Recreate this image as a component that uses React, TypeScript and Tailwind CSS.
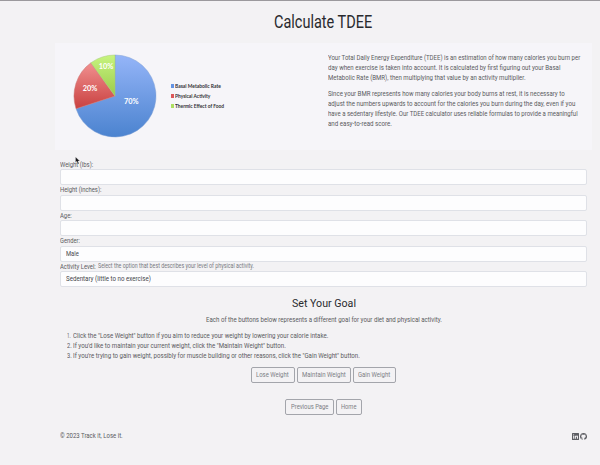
import { useLayoutEffect, useRef, useState } from "react";

type FitProps = { w: number; children: string; className?: string };

// A single line of text condensed or widened to a fixed measure.
function Fit({ w, children, className = "" }: FitProps) {
  const ref = useRef<HTMLSpanElement>(null);
  const [scale, setScale] = useState(1);
  useLayoutEffect(() => {
    if (ref.current) setScale(w / ref.current.offsetWidth);
  }, [w]);
  return (
    <span className={`inline-block whitespace-nowrap text-left ${className}`} style={{ width: w }}>
      <span ref={ref} className="inline-block origin-left" style={{ transform: `scaleX(${scale})` }}>
        {children}
      </span>
    </span>
  );
}

function Field({ label, w, value, valueW, hint }: { label: string; w: number; value?: string; valueW?: number; hint?: string }) {
  return (
    <div className="flex h-[25.5px] flex-col">
      <div className="flex h-[9.5px] items-center gap-[2px] leading-[9px]">
        <Fit w={w}>{label}</Fit>
        {hint && <Fit w={156} className="text-[6.3px] text-[#777980]">{hint}</Fit>}
      </div>
      <div className="flex h-4 items-center rounded-[2px] border border-[#dfe1e7] bg-[#fdfdfe] px-[4.5px] leading-[10px] text-[#45474c]">
        {value && <Fit w={valueW ?? 20}>{value}</Fit>}
      </div>
    </div>
  );
}

function Button({ children, w }: { children: string; w: number }) {
  return (
    <button className="flex h-4 items-center rounded-[2px] border border-[#a3a5ab] px-[4.3px] text-[7.4px] leading-[10px] text-[#7c7e84]">
      <Fit w={w}>{children}</Fit>
    </button>
  );
}

function Pie() {
  return (
    <svg className="block h-[84px] w-[84px]" viewBox="0 0 84 84">
      <defs>
        <linearGradient id="blue" x1="0" y1="0" x2="0" y2="1">
          <stop stopColor="#95b5f8" /><stop offset="1" stopColor="#4b83cf" />
        </linearGradient>
        <linearGradient id="red" x1="0" y1="0" x2="0" y2="1">
          <stop stopColor="#f19090" /><stop offset="1" stopColor="#c94140" />
        </linearGradient>
        <linearGradient id="green" x1="0" y1="0" x2="0" y2="1">
          <stop stopColor="#c7f47f" /><stop offset="1" stopColor="#9bcb4c" />
        </linearGradient>
      </defs>
      <path d="M42 42V1A41 41 0 1 1 3.01 54.67Z" fill="url(#blue)" stroke="#7d9ed4" strokeWidth=".5" />
      <path d="M42 42L3.01 54.67A41 41 0 0 1 17.9 8.83Z" fill="url(#red)" stroke="#c87877" strokeWidth=".5" />
      <path d="M42 42L17.9 8.83A41 41 0 0 1 42 1Z" fill="url(#green)" stroke="#a5c878" strokeWidth=".5" />
      <g fill="#fff" fontFamily="Lato, sans-serif" fontSize="7.4" fontWeight="700" textAnchor="middle">
        <text x="58.3" y="50">70%</text>
        <text x="17" y="36.5">20%</text>
        <text x="33" y="14.5">10%</text>
      </g>
    </svg>
  );
}

const paragraphs: [string, number][][] = [
  [
    ["Your Total Daily Energy Expenditure (TDEE) is an estimation of how many calories you burn per", 252.5],
    ["day when exercise is taken into account. It is calculated by first figuring out your Basal", 232],
    ["Metabolic Rate (BMR), then multiplying that value by an activity multiplier.", 198],
  ],
  [
    ["Since your BMR represents how many calories your body burns at rest, it is necessary to", 237],
    ["adjust the numbers upwards to account for the calories you burn during the day, even if you", 247.5],
    ["have a sedentary lifestyle. Our TDEE calculator uses reliable formulas to provide a meaningful", 249.5],
    ["and easy-to-read score.", 63.5],
  ],
];

const steps: [string, string, number][] = [
  ["1.", 'Click the "Lose Weight" button if you aim to reduce your weight by lowering your calorie intake.', 255],
  ["2.", 'If you\'d like to maintain your current weight, click the "Maintain Weight" button.', 213],
  ["3.", 'If you\'re trying to gain weight, possibly for muscle building or other reasons, click the "Gain Weight" button.', 286.5],
];

export default function App() {
  return (
    <div className="h-[465px] w-[600px] overflow-hidden border-t border-[#9b999d] bg-[#f3f2f4] font-['Roboto',sans-serif] text-[7.2px] text-[#5a5b60]">
      <div className="relative ml-[55px] w-[537px]">
        <h1 className="flex h-[42px] items-center justify-center text-[17.5px] leading-[20px] text-[#292a2e]">
          <Fit w={98.5}>Calculate TDEE</Fit>
        </h1>

        <section className="flex h-[106.5px] bg-[#f6f5f9]">
          <div className="flex w-[273px] pl-[17.8px] pt-[10.6px]">
            <Pie />
            <ul className="ml-[14px] pt-[27.7px] font-['Lato','Open_Sans',sans-serif] text-[5.4px] font-bold text-[#303034]">
              <li className="flex h-[9.8px] items-center gap-[1px]"><i className="size-[3.5px] bg-[#6493e2]" /><Fit w={45.5}>Basal Metabolic Rate</Fit></li>
              <li className="flex h-[9.8px] items-center gap-[1px]"><i className="size-[3.5px] bg-[#dc5759]" /><Fit w={35}>Physical Activity</Fit></li>
              <li className="flex h-[9.8px] items-center gap-[1px]"><i className="size-[3.5px] bg-[#aede62]" /><Fit w={49.5}>Thermic Effect of Food</Fit></li>
            </ul>
          </div>
          <div className="flex flex-col gap-[6.7px] pt-[10.1px]">
            {paragraphs.map((lines, i) => (
              <div key={i}>
                {lines.map(([line, w]) => (
                  <div key={line} className="h-[9.9px] leading-[9.9px]"><Fit w={w}>{line}</Fit></div>
                ))}
              </div>
            ))}
          </div>
        </section>

        <form className="px-[5px] pt-[10px]">
          <Field label="Weight (lbs):" w={33} />
          <Field label="Height (inches):" w={41} />
          <Field label="Age:" w={11.5} />
          <Field label="Gender:" w={20} value="Male" valueW={13} />
          <Field label="Activity Level:" w={36} value="Sedentary (little to no exercise)" valueW={85} hint="Select the option that best describes your level of physical activity." />
        </form>

        <h2 className="mt-[9px] flex h-[15px] items-center justify-center text-[11.8px] leading-[15px] text-[#292a2e]">
          <Fit w={64}>Set Your Goal</Fit>
        </h2>
        <p className="mt-[3.5px] flex h-[10px] items-center justify-center leading-[10px]">
          <Fit w={236}>Each of the buttons below represents a different goal for your diet and physical activity.</Fit>
        </p>
        <ol className="mt-[6.5px] pl-[12px]">
          {steps.map(([n, text, w]) => (
            <li key={n} className="flex h-[9.9px] items-center leading-[9.9px]">
              <span className="w-[6px]"><Fit w={n === "1." ? 3.7 : 4.7}>{n}</Fit></span>
              <Fit w={w}>{text}</Fit>
            </li>
          ))}
        </ol>
        <div className="mt-[6.5px] flex justify-center gap-[2px]">
          <Button w={33}>Lose Weight</Button>
          <Button w={43.5}>Maintain Weight</Button>
          <Button w={32.5}>Gain Weight</Button>
        </div>
        <div className="mt-4 flex justify-center gap-[2px]">
          <Button w={37.5}>Previous Page</Button>
          <Button w={15.5}>Home</Button>
        </div>

        <footer className="mt-[15.5px] flex h-[12px] items-center justify-between pl-[5px] pr-[5px]">
          <Fit w={62.5}>© 2023 Track it, Lose it.</Fit>
          <div className="flex items-center gap-[1.5px]">
            <svg className="size-[7px]" viewBox="0 0 16 16" fill="#5d5e63">
              <path fillRule="evenodd" d="M0 1.2Q0 0 1.2 0h13.6Q16 0 16 1.2v13.6q0 1.2-1.2 1.2H1.2Q0 16 0 14.8ZM2.6 6.2v7.2H5V6.2Zm1.2-3.5a1.25 1.25 0 1 0 0 2.5 1.25 1.25 0 0 0 0-2.5ZM6.5 6.2v7.2h2.4v-4c0-2 2.4-2.1 2.4 0v4h2.4V8.8c0-3.5-3.7-3.4-4.8-1.6v-1Z" />
            </svg>
            <svg className="size-[7px]" viewBox="0 0 16 16" fill="#5d5e63">
              <path d="M8 0a8 8 0 0 0-2.53 15.59c.4.07.55-.17.55-.38v-1.49c-2.23.49-2.7-.95-2.7-.95-.36-.92-.89-1.17-.89-1.17-.73-.5.06-.49.06-.49.8.06 1.23.83 1.23.83.71 1.22 1.87.87 2.33.66.07-.52.28-.87.51-1.07-1.78-.2-3.65-.89-3.65-3.95 0-.87.31-1.59.82-2.15-.08-.2-.35-1.02.08-2.12 0 0 .67-.22 2.2.82a7.7 7.7 0 0 1 4 0c1.53-1.04 2.2-.82 2.2-.82.43 1.1.16 1.92.08 2.12.51.56.82 1.28.82 2.15 0 3.07-1.87 3.75-3.66 3.95.29.25.54.73.54 1.48v2.2c0 .21.15.46.55.38A8 8 0 0 0 8 0Z" />
            </svg>
          </div>
        </footer>

        <svg className="absolute left-[20px] top-[155.5px] h-[7px] w-[5px]" viewBox="0 0 10 14">
          <path d="M1 0v11l2.6-2.3L6 14l2-1-2.2-4.8H9.5Z" fill="#151518" stroke="#fff" strokeWidth=".5" />
        </svg>
      </div>
    </div>
  );
}
